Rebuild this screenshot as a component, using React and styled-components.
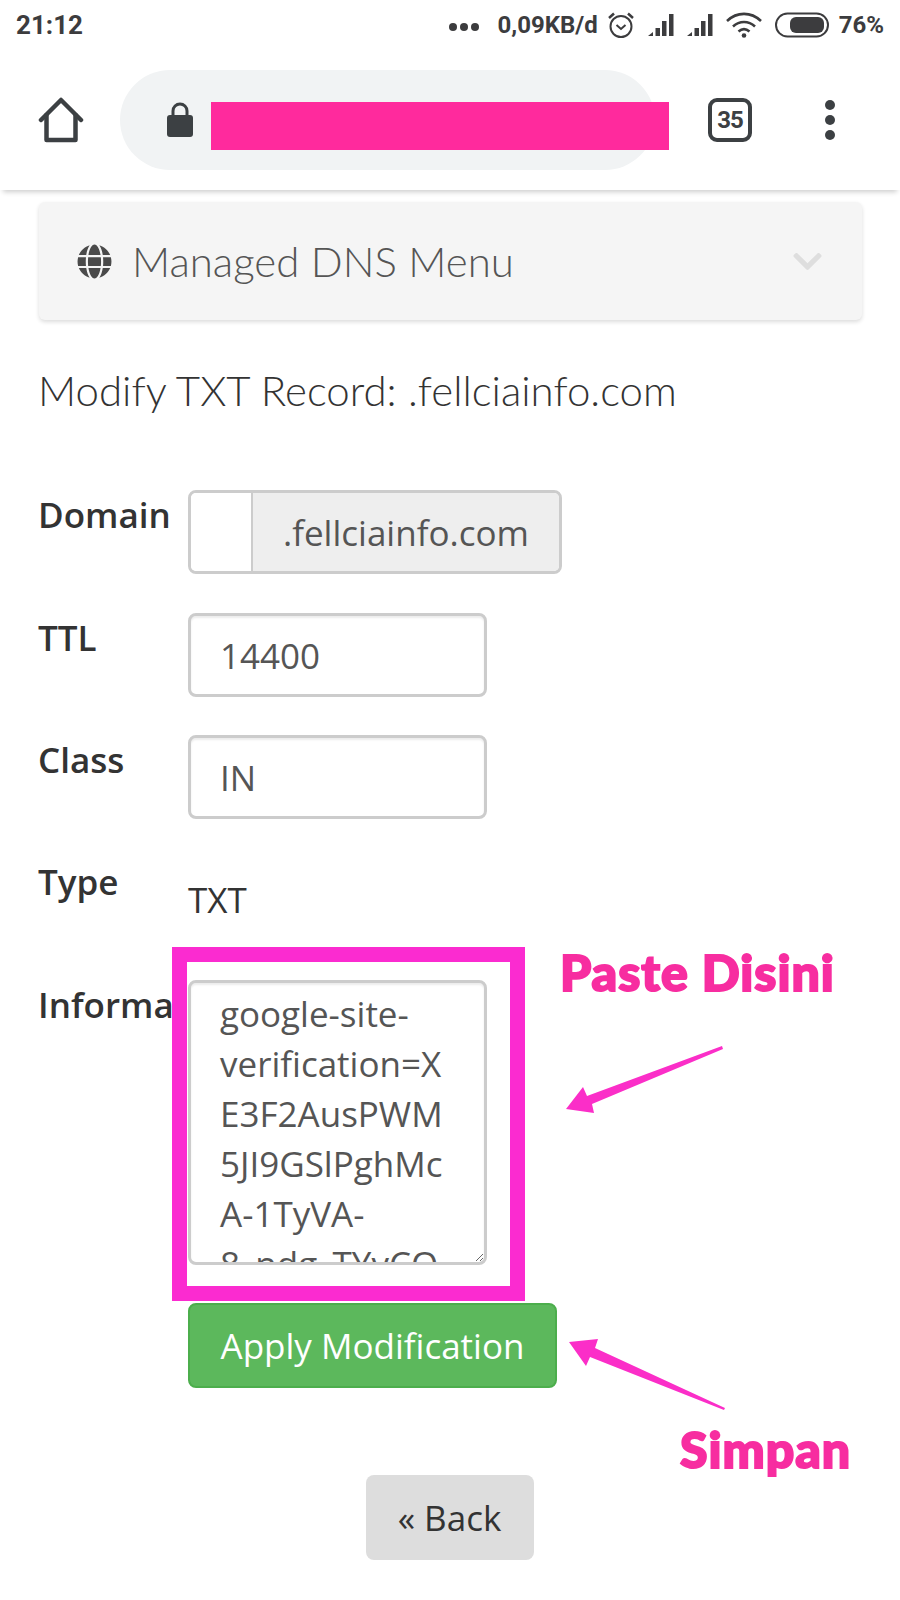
import styled, { createGlobalStyle } from 'styled-components'
import { FaGlobe, FaChevronDown } from 'react-icons/fa'

const GlobalStyle = createGlobalStyle`
  html, body {
    margin: 0;
    padding: 0;
    background: #fff;
  }
`

const Page = styled.div`
  position: relative;
  width: 900px;
  height: 1600px;
  overflow: hidden;
  background: #fff;
  font-family: 'Open Sans', sans-serif;
`

const StatusBar = styled.div`
  height: 50px;
  display: flex;
  align-items: center;
  padding: 0 16px;
  font-family: Roboto, sans-serif;
  font-weight: 700;
  font-size: 24px;
  color: #3c3c3e;
`

const Clock = styled.div`
  font-size: 26px;
  margin-right: auto;
`

const StatusDots = styled.div`
  display: flex;
  gap: 3px;
  margin-top: 4px;
  margin-right: 19px;
`

const StatusDot = styled.span`
  width: 8px;
  height: 8px;
  border-radius: 50%;
  background: #3c3c3e;
`

const StatusIcons = styled.div`
  display: flex;
  align-items: center;
  margin-left: 9px;
  gap: 13px;
  margin-right: 10px;
`

const Toolbar = styled.div`
  position: relative;
  z-index: 2;
  height: 140px;
  display: flex;
  align-items: center;
  padding-left: 38px;
  background: #fff;
  box-shadow: 0 5px 5px -3px rgba(0, 0, 0, 0.2);
`

const UrlPill = styled.div`
  width: 535px;
  height: 100px;
  margin-left: 36px;
  display: flex;
  align-items: center;
  gap: 18px;
  padding-left: 47px;
  box-sizing: border-box;
  border-radius: 50px;
  background: #f1f3f4;

  svg {
    flex-shrink: 0;
  }
`

const Redaction = styled.div`
  flex-shrink: 0;
  width: 458px;
  height: 48px;
  margin-top: 12px;
  background: #ff2a9d;
`

const TabCount = styled.div`
  width: 44px;
  height: 44px;
  margin-left: 53px;
  box-sizing: border-box;
  border: 4px solid #3c4043;
  border-radius: 9px;
  display: flex;
  align-items: center;
  justify-content: center;
  font-family: Roboto, sans-serif;
  font-weight: 700;
  font-size: 24px;
  letter-spacing: -1px;
  color: #3c4043;
`

const MoreMenu = styled.div`
  margin-left: 73px;
  display: flex;
  flex-direction: column;
  gap: 5px;
`

const MoreDot = styled.span`
  width: 10px;
  height: 10px;
  border-radius: 50%;
  background: #3c4043;
`

const Content = styled.div`
  padding: 12px 38px 0 39px;
`

const MenuBar = styled.div`
  height: 118px;
  display: flex;
  align-items: center;
  padding: 0 38px 0 38px;
  border-radius: 6px;
  background: #f5f5f5;
  box-shadow: 0 2px 4px rgba(0, 0, 0, 0.14);
  color: #4a4a4a;
`

const MenuTitle = styled.div`
  flex: 1;
  margin-left: 20px;
  font-family: Lato, sans-serif;
  font-weight: 300;
  font-size: 42px;
  color: #555;
`

const Heading = styled.h1`
  margin: 47px 0 77px -1px;
  font-family: Lato, sans-serif;
  font-weight: 300;
  font-size: 42px;
  line-height: 46px;
  color: #333;
`

const Row = styled.div`
  display: grid;
  grid-template-columns: 149px 1fr;
  margin-bottom: ${({ gap }) => gap}px;
`

const Label = styled.label`
  margin: 0 2px 0 -1px;
  font-weight: 600;
  font-size: 35px;
  line-height: 50px;
  white-space: nowrap;
  overflow: hidden;
  color: #333;
`

const InputGroup = styled.div`
  width: 374px;
  height: 84px;
  box-sizing: border-box;
  display: flex;
  border: 3px solid #ccc;
  border-radius: 8px;
  overflow: hidden;
`

const GroupBlank = styled.div`
  width: 60px;
  border-right: 2px solid #ccc;
  background: #fff;
`

const GroupAddon = styled.div`
  flex: 1;
  display: flex;
  align-items: center;
  padding-left: 30px;
  font-size: 35px;
  color: #555;
  background: #eee;
`

const Field = styled.div`
  width: 299px;
  height: 84px;
  box-sizing: border-box;
  display: flex;
  align-items: center;
  padding-left: 29px;
  border: 3px solid #ccc;
  border-radius: 8px;
  box-shadow: inset 0 2px 2px rgba(0, 0, 0, 0.075);
  font-size: 35px;
  color: #555;
`

const PlainValue = styled.div`
  padding-top: 18px;
  font-size: 35px;
  line-height: 50px;
  color: #333;
`

const TextArea = styled.textarea`
  position: relative;
  display: block;
  width: 299px;
  height: 285px;
  box-sizing: border-box;
  margin: 0;
  padding: 6px 29px;
  border: 3px solid #ccc;
  border-radius: 8px;
  box-shadow: inset 0 2px 2px rgba(0, 0, 0, 0.075);
  outline: none;
  overflow: hidden;
  resize: vertical;
  font-family: 'Open Sans', sans-serif;
  font-size: 35px;
  line-height: 50px;
  color: #555;
  background: #fff;
`

const ApplyButton = styled.button`
  display: block;
  width: 369px;
  height: 85px;
  padding: 0;
  border: 2px solid #4cae4c;
  border-radius: 8px;
  font-family: 'Open Sans', sans-serif;
  font-size: 35px;
  color: #fff;
  background: #5cb85c;
`

const BackRow = styled.div`
  display: flex;
  justify-content: center;
  padding: 87px 2px 0 0;
`

const BackButton = styled.button`
  width: 168px;
  height: 85px;
  border: none;
  border-radius: 8px;
  font-family: 'Open Sans', sans-serif;
  font-size: 35px;
  color: #333;
  background: #ddd;
`

const HighlightFrame = styled.div`
  position: absolute;
  left: 172px;
  top: 947px;
  width: 353px;
  height: 354px;
  box-sizing: border-box;
  border: 15px solid #fb2bd0;
  pointer-events: none;
`

const Callout = styled.div`
  position: absolute;
  left: ${({ x }) => x}px;
  top: ${({ y }) => y}px;
  font-family: Lato, sans-serif;
  font-weight: 900;
  font-size: ${({ size }) => size}px;
  line-height: 1;
  white-space: nowrap;
  color: #f72da0;
  -webkit-text-stroke: 2px #f72da0;
  letter-spacing: 1px;
`

const ArrowLayer = styled.svg`
  position: absolute;
  left: 0;
  top: 0;
  pointer-events: none;
`

const AlarmIcon = () => (
  <svg width="28" height="28" viewBox="0 0 28 28" fill="none" stroke="#3c3c3e" strokeWidth="2">
    <circle cx="14" cy="15.5" r="10.5" />
    <path d="M9.5 14l4.5 4 4.5-4" />
    <path d="M2 7l5-4.5M26 7l-5-4.5" strokeWidth="2.5" />
  </svg>
)

const SignalIcon = () => (
  <svg width="26" height="24" viewBox="0 0 26 24" fill="#3c3c3e">
    <path d="M0 23l5-4v4zM7.500 15h4.500v8H7.500zM14 8h4.500v15H14zM21 1h4.500v22H21z" />
  </svg>
)

const WifiIcon = () => (
  <svg width="36" height="26" viewBox="0 0 36 26" fill="none" stroke="#3c3c3e" strokeWidth="2.6">
    <path d="M1 9c10-9.500 24-9.500 34 0M7 14.500c6.500-6 15.500-6 22 0M12.500 19.500c3.500-3 7.500-3 11 0" />
    <circle cx="18" cy="23.500" r="2.300" fill="#3c3c3e" stroke="none" />
  </svg>
)

const BatteryIcon = () => (
  <svg width="54" height="26" viewBox="0 0 54 26">
    <rect x="1" y="1.500" width="52" height="23" rx="11.500" fill="none" stroke="#3c3c3e" strokeWidth="2" />
    <rect x="15" y="5" width="34" height="16" rx="6" fill="#3c3c3e" />
  </svg>
)

const HomeIcon = () => (
  <svg width="46" height="46" viewBox="0 0 46 46" fill="none" stroke="#3c4043" strokeWidth="4.500" strokeLinejoin="round" strokeLinecap="round">
    <path d="M3 23L23 3l20 20" />
    <path d="M8.500 18v25h29V18" />
  </svg>
)

const LockIcon = () => (
  <svg width="26" height="36" viewBox="0 0 26 36">
    <path d="M6 15V9a7 7 0 0 1 14 0v6" fill="none" stroke="#3c4043" strokeWidth="3" />
    <rect x="0" y="13" width="26" height="22" rx="3" fill="#3c4043" />
  </svg>
)

const App = () => {
  return (
    <Page>
      <GlobalStyle />
      <StatusBar>
        <Clock>21:12</Clock>
        <StatusDots>
          <StatusDot />
          <StatusDot />
          <StatusDot />
        </StatusDots>
        <span>0,09KB/d</span>
        <StatusIcons>
          <AlarmIcon />
          <SignalIcon />
          <SignalIcon />
          <WifiIcon />
          <BatteryIcon />
        </StatusIcons>
        <span>76%</span>
      </StatusBar>
      <Toolbar>
        <HomeIcon />
        <UrlPill>
          <LockIcon />
          <Redaction />
        </UrlPill>
        <TabCount>35</TabCount>
        <MoreMenu>
          <MoreDot />
          <MoreDot />
          <MoreDot />
        </MoreMenu>
      </Toolbar>
      <Content>
        <MenuBar>
          <FaGlobe size={35} />
          <MenuTitle>Managed DNS Menu</MenuTitle>
          <FaChevronDown size={33} color="#dedede" />
        </MenuBar>
        <Heading>Modify TXT Record: .fellciainfo.com</Heading>
        <Row gap={39}>
          <Label>Domain</Label>
          <InputGroup>
            <GroupBlank />
            <GroupAddon>.fellciainfo.com</GroupAddon>
          </InputGroup>
        </Row>
        <Row gap={38}>
          <Label>TTL</Label>
          <Field>14400</Field>
        </Row>
        <Row gap={38}>
          <Label>Class</Label>
          <Field>IN</Field>
        </Row>
        <Row gap={55}>
          <Label>Type</Label>
          <PlainValue>TXT</PlainValue>
        </Row>
        <Row gap={38}>
          <Label>Information</Label>
          <TextArea
            readOnly
            value="google-site-verification=XE3F2AusPWM5JI9GSlPghMcA-1TyVA-8_ndg_TYvCO"
          />
        </Row>
        <Row gap={0}>
          <span />
          <ApplyButton>Apply Modification</ApplyButton>
        </Row>
        <BackRow>
          <BackButton>« Back</BackButton>
        </BackRow>
      </Content>
      <HighlightFrame />
      <Callout x={560} y={947} size={50}>Paste Disini</Callout>
      <Callout x={680} y={1424} size={50}>Simpan</Callout>
      <ArrowLayer width="900" height="1600" fill="#fb2ec8">
        <polygon points="722,1046 723,1049 592,1104 594,1113 566,1109 583,1087 587,1096" />
        <polygon points="725,1408 724,1410 590,1357 586,1366 569,1342 598,1339 595,1348" />
      </ArrowLayer>
    </Page>
  )
}

export default App
